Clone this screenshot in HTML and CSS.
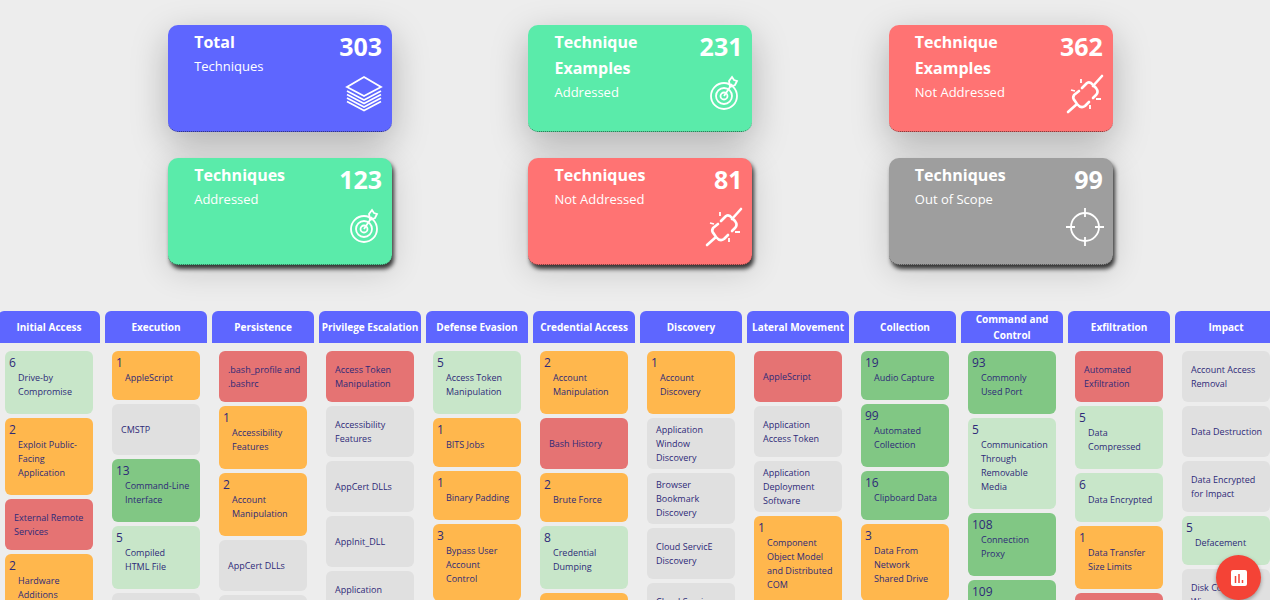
FILE: index.html
```html
<!DOCTYPE html>
<html lang="en">
<head>
<meta charset="utf-8">
<title>Technique Coverage</title>
<link rel="stylesheet" href="styles.css">
</head>
<body>
<svg class="sprite" aria-hidden="true">
  <symbol id="layers" viewBox="0 0 40 40">
    <path d="M20 3 37 13 20 22 3 13Z"/>
    <path d="M3 17 20 26 37 17M3 20.500 20 29.500 37 20.500M3 24 20 33 37 24M3 27.500 20 36.500 37 27.500"/>
  </symbol>
  <symbol id="target" viewBox="0 0 40 40">
    <circle cx="20" cy="22" r="13"/><circle cx="20" cy="22" r="8"/><circle cx="20" cy="22" r="3.500"/>
    <path d="M20 22 28 10M26 13 25 7 28 3 30 6 33 7 31 11Z"/>
  </symbol>
  <symbol id="broken" viewBox="0 0 40 40">
    <path class="thick" d="M3 38 12 30M28 12 37 2M17 14 22 9Q25 7 28 11L31 14Q34 18 31 21L28 24M14 17 9 21Q7 24 10 27L12 30Q16 35 20 32L24 28"/>
    <path d="M16 5V9M6 16 10 17M31 25H36M25 31V35"/>
  </symbol>
  <symbol id="scope" viewBox="0 0 40 40">
    <circle cx="20" cy="20" r="14"/><path d="M20 1V10M20 30V39M1 20H10M30 20H39"/>
  </symbol>
</svg>
<main class="page">
  <section class="summary">
    <article class="stat blue"><div class="label"><h2>Total</h2><p>Techniques</p></div><div class="figure"><strong>303</strong><svg><use href="#layers"/></svg></div></article>
    <article class="stat green"><div class="label"><h2>Technique Examples</h2><p>Addressed</p></div><div class="figure"><strong>231</strong><svg><use href="#target"/></svg></div></article>
    <article class="stat red"><div class="label"><h2>Technique Examples</h2><p>Not Addressed</p></div><div class="figure"><strong>362</strong><svg><use href="#broken"/></svg></div></article>
    <article class="stat raised green"><div class="label"><h2>Techniques</h2><p>Addressed</p></div><div class="figure"><strong>123</strong><svg><use href="#target"/></svg></div></article>
    <article class="stat raised red"><div class="label"><h2>Techniques</h2><p>Not Addressed</p></div><div class="figure"><strong>81</strong><svg><use href="#broken"/></svg></div></article>
    <article class="stat raised gray"><div class="label"><h2>Techniques</h2><p>Out of Scope</p></div><div class="figure"><strong>99</strong><svg><use href="#scope"/></svg></div></article>
  </section>
  <section class="matrix">
    <div class="tactic"><h3>Initial Access</h3>
      <div class="card low"><b>6</b><p>Drive-by Compromise</p></div>
      <div class="card few"><b>2</b><p>Exploit Public-Facing Application</p></div>
      <div class="card none"><p>External Remote Services</p></div>
      <div class="card few"><b>2</b><p>Hardware Additions</p></div>
    </div>
    <div class="tactic"><h3>Execution</h3>
      <div class="card few"><b>1</b><p>AppleScript</p></div>
      <div class="card out"><p>CMSTP</p></div>
      <div class="card high"><b>13</b><p>Command-Line Interface</p></div>
      <div class="card low"><b>5</b><p>Compiled HTML&nbsp;File</p></div>
      <div class="card out"></div>
    </div>
    <div class="tactic"><h3>Persistence</h3>
      <div class="card none"><p>.bash_profile and .bashrc</p></div>
      <div class="card few"><b>1</b><p>Accessibility Features</p></div>
      <div class="card few"><b>2</b><p>Account Manipulation</p></div>
      <div class="card out"><p>AppCert DLLs</p></div>
      <div class="card out"></div>
    </div>
    <div class="tactic"><h3>Privilege Escalation</h3>
      <div class="card none"><p>Access Token Manipulation</p></div>
      <div class="card out"><p>Accessibility Features</p></div>
      <div class="card out"><p>AppCert DLLs</p></div>
      <div class="card out"><p>AppInit_DLL</p></div>
      <div class="card out"><p>Application Shimming</p></div>
    </div>
    <div class="tactic"><h3>Defense Evasion</h3>
      <div class="card low"><b>5</b><p>Access Token Manipulation</p></div>
      <div class="card few"><b>1</b><p>BITS Jobs</p></div>
      <div class="card few"><b>1</b><p>Binary Padding</p></div>
      <div class="card few"><b>3</b><p>Bypass User Account<br>Control</p></div>
    </div>
    <div class="tactic"><h3>Credential Access</h3>
      <div class="card few"><b>2</b><p>Account Manipulation</p></div>
      <div class="card none"><p>Bash History</p></div>
      <div class="card few"><b>2</b><p>Brute Force</p></div>
      <div class="card low"><b>8</b><p>Credential Dumping</p></div>
      <div class="card few"><b>3</b></div>
    </div>
    <div class="tactic"><h3>Discovery</h3>
      <div class="card few"><b>1</b><p>Account Discovery</p></div>
      <div class="card out"><p>Application Window Discovery</p></div>
      <div class="card out"><p>Browser Bookmark Discovery</p></div>
      <div class="card out"><p>Cloud ServicE Discovery</p></div>
      <div class="card out"><p>Cloud Service Dashboard</p></div>
    </div>
    <div class="tactic"><h3>Lateral Movement</h3>
      <div class="card none"><p>AppleScript</p></div>
      <div class="card out"><p>Application Access Token</p></div>
      <div class="card out"><p>Application Deployment Software</p></div>
      <div class="card few"><b>1</b><p>Component Object Model and&nbsp;Distributed COM</p></div>
    </div>
    <div class="tactic"><h3>Collection</h3>
      <div class="card high"><b>19</b><p>Audio Capture</p></div>
      <div class="card high"><b>99</b><p>Automated Collection</p></div>
      <div class="card high"><b>16</b><p>Clipboard Data</p></div>
      <div class="card few"><b>3</b><p>Data From Network Shared&nbsp;Drive</p></div>
    </div>
    <div class="tactic"><h3>Command and Control</h3>
      <div class="card high"><b>93</b><p>Commonly Used&nbsp;Port</p></div>
      <div class="card low"><b>5</b><p>Communication Through Removable Media</p></div>
      <div class="card high"><b>108</b><p>Connection Proxy</p></div>
      <div class="card high"><b>109</b></div>
    </div>
    <div class="tactic"><h3>Exfiltration</h3>
      <div class="card none"><p>Automated Exfiltration</p></div>
      <div class="card low"><b>5</b><p>Data Compressed</p></div>
      <div class="card low"><b>6</b><p>Data Encrypted</p></div>
      <div class="card few"><b>1</b><p>Data Transfer Size Limits</p></div>
      <div class="card none"></div>
    </div>
    <div class="tactic"><h3>Impact</h3>
      <div class="card out"><p>Account Access Removal</p></div>
      <div class="card out"><p>Data Destruction</p></div>
      <div class="card out"><p>Data Encrypted for Impact</p></div>
      <div class="card low"><b>5</b><p>Defacement</p></div>
      <div class="card out"><p>Disk Content Wipe</p></div>
    </div>
  </section>
  <button class="chart-button" type="button" aria-label="Show chart">
    <svg viewBox="0 0 16 16"><rect width="16" height="16" rx="2" fill="#fff"/><path d="M4.500 6V13M8 4V13M11.500 10V13" stroke="#f44336" stroke-width="1.500"/></svg>
  </button>
</main>
</body>
</html>
```
FILE: styles.css
```css
* { box-sizing: border-box; }
body {
  margin: 0;
  background: #ededed;
  font-family: "Open Sans", "Noto Sans", sans-serif;
}
h2, h3, p { margin: 0; }
.sprite { position: absolute; width: 0; height: 0; }
.page { height: 100vh; overflow: hidden; }

.summary {
  display: grid;
  grid-template-columns: repeat(3, 1fr);
  justify-items: center;
  gap: 26px 0;
  padding: 25px 89px 0 100px;
}
.stat {
  display: flex;
  justify-content: space-between;
  width: 224px;
  min-height: 107px;
  padding: 4px 10px 0 26px;
  border-bottom: 1px dotted rgba(0, 0, 0, 0.6);
  border-radius: 10px;
  color: #fff;
  box-shadow: 0 12px 36px rgba(0, 0, 0, 0.26);
}
.stat.raised { box-shadow: 2px 4px 4px rgba(0, 0, 0, 0.75), 0 6px 32px rgba(0, 0, 0, 0.16); }
.blue { background: #5e66ff; }
.green { background: #5aebaa; }
.red { background: #ff7373; }
.gray { background: #9e9e9e; }
.label { flex: 1; }
.stat h2 { font-size: 16px; line-height: 26px; font-weight: 700; }
.stat p { font-size: 13px; line-height: 22px; }
.figure { display: flex; flex-direction: column; align-items: flex-end; }
.figure strong { font-size: 25px; line-height: 34px; }
.figure svg {
  width: 40px;
  height: 40px;
  margin: 11px -2px 0 0;
  fill: none;
  stroke: #fff;
  stroke-width: 1.8;
}
.thick { stroke-width: 2.6; stroke-linecap: round; stroke-linejoin: round; }

.matrix {
  display: grid;
  grid-template-columns: repeat(12, minmax(0, 1fr));
  gap: 5px;
  margin: 46px -7px 0 -2px;
}
.tactic { display: flex; flex-direction: column; gap: 4px; padding-bottom: 8px; }
.tactic h3 {
  display: flex;
  align-items: center;
  justify-content: center;
  height: 32px;
  margin-bottom: 4px;
  border-radius: 6px 6px 0 0;
  background: #5e66ff;
  color: #fff;
  font-size: 10px;
  line-height: 16px;
  text-align: center;
}
.card {
  display: flex;
  flex-direction: column;
  justify-content: center;
  min-height: 51px;
  margin: 0 7px;
  padding: 0 4px 0 9px;
  border-radius: 6px;
  color: #2e2a78;
  font-size: 9px;
  line-height: 14px;
}
.card:has(b) {
  justify-content: flex-start;
  min-height: 49px;
  padding: 4px 4px 15px 4px;
}
.card b { font-size: 12px; line-height: 16px; font-weight: 400; }
.card b + p { padding-left: 9px; }
.low { background: #c8e6c9; }
.high { background: #81c784; }
.few { background: #ffb74d; }
.none { background: #e57373; }
.out { background: #e0e0e0; }

.chart-button {
  position: fixed;
  right: 9px;
  bottom: 0;
  display: grid;
  place-items: center;
  width: 45px;
  height: 45px;
  padding: 0;
  border: 0;
  border-radius: 50%;
  background: #f44336;
  box-shadow: 0 2px 4px rgba(0, 0, 0, 0.35);
}
.chart-button svg { width: 16px; height: 16px; }
```
